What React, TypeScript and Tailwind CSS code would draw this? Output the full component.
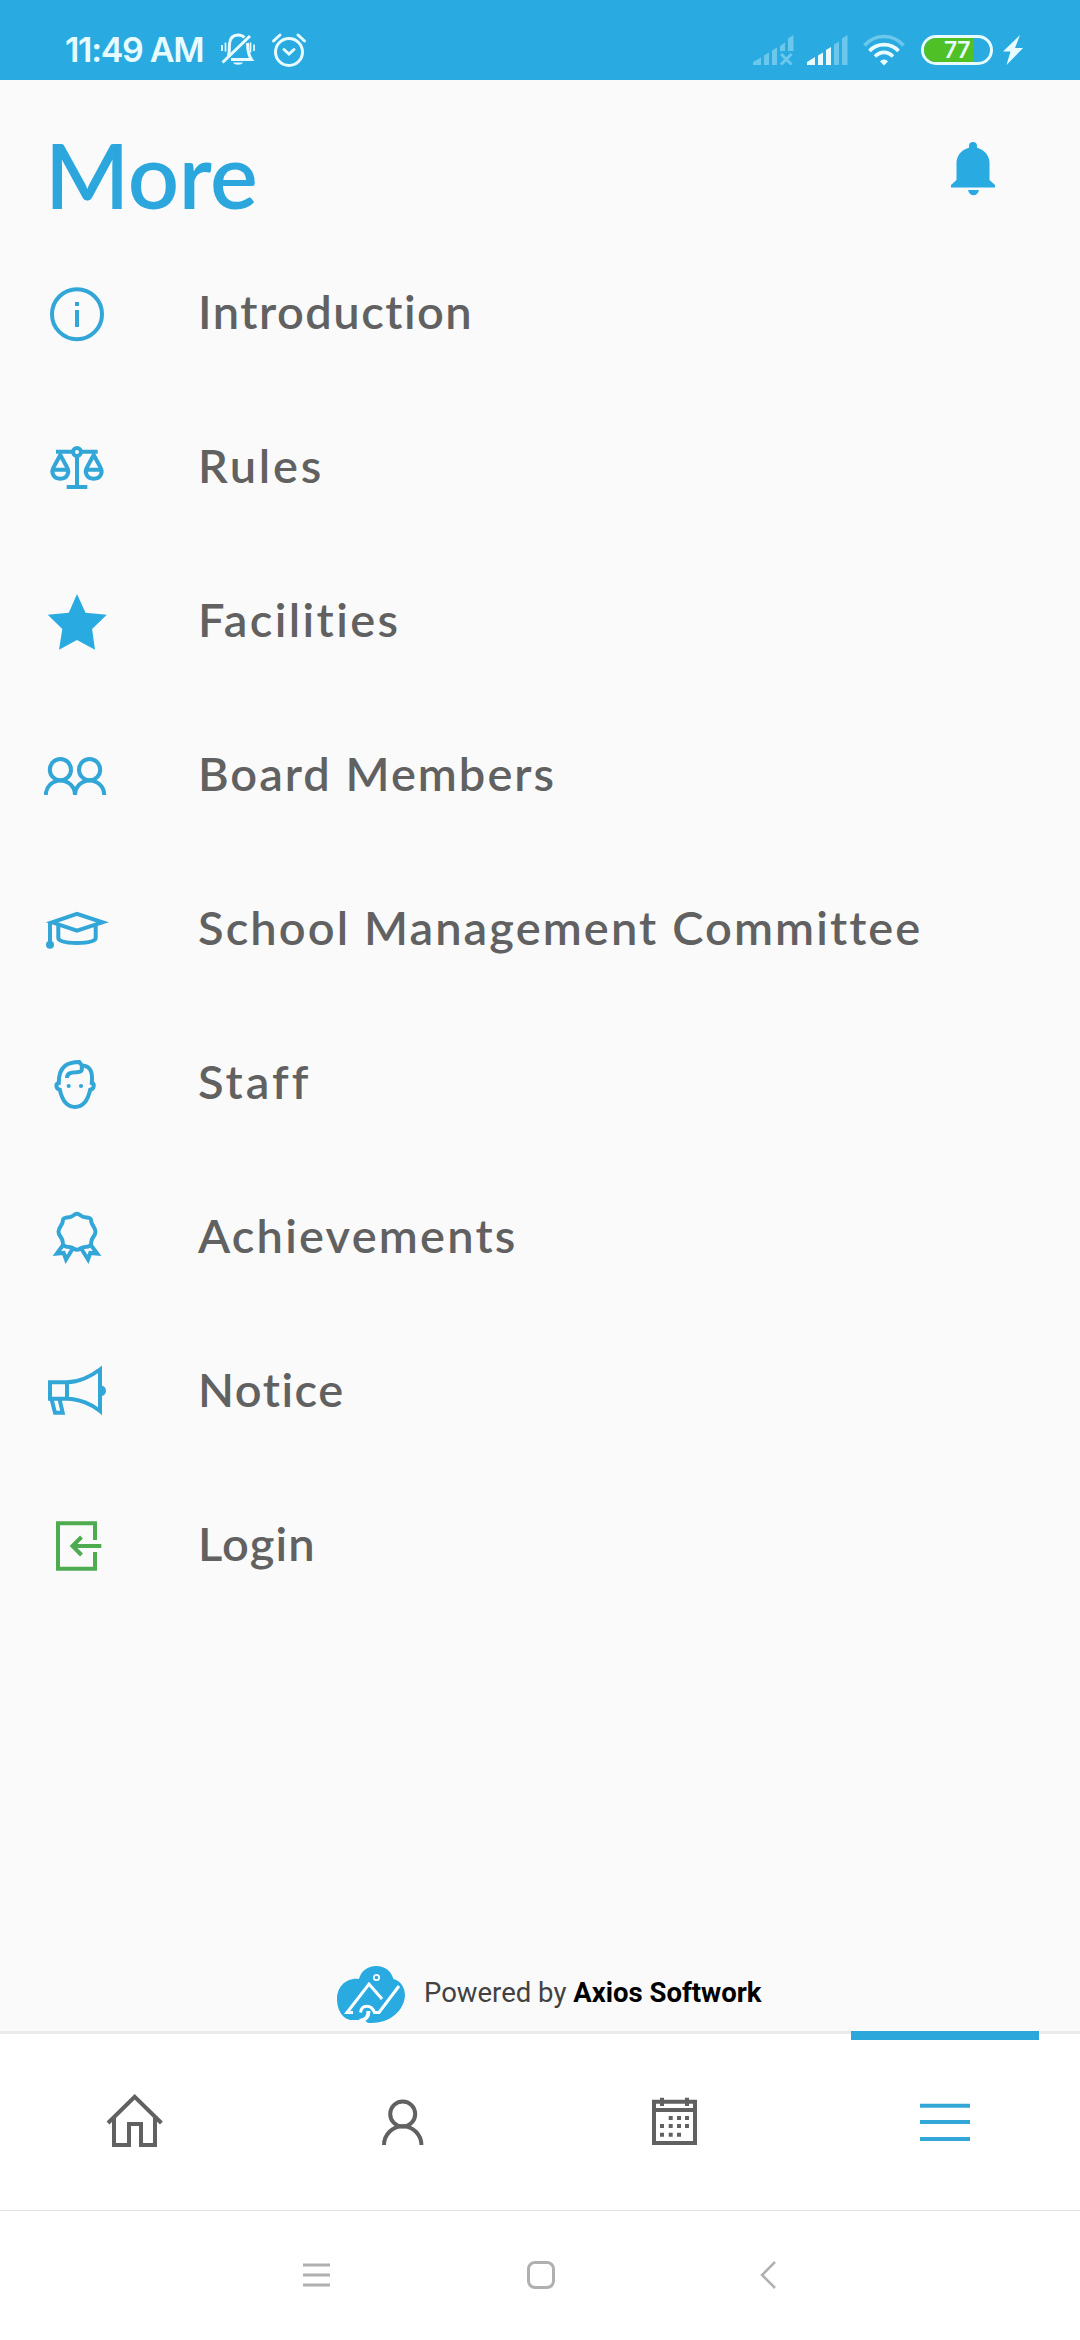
import type { ReactNode } from "react";

type MenuItem = {
  label: string;
  tracking: string;
  color: string;
  icon: ReactNode;
};

// Outline icon on a 66px grid
function LineIcon({ children }: { children: ReactNode }) {
  return (
    <svg
      viewBox="0 0 66 66"
      fill="none"
      stroke="currentColor"
      strokeWidth="4"
      className="size-[66px] shrink-0"
    >
      {children}
    </svg>
  );
}

const menuItems: MenuItem[] = [
  {
    label: "Introduction",
    tracking: "tracking-[1.5px]",
    color: "text-[#33a6d8]",
    icon: (
      <>
        <circle cx="33" cy="33.2" r="25" />
        <path d="M33 21v4M33 29v17" />
      </>
    ),
  },
  {
    label: "Rules",
    tracking: "tracking-[2.8px]",
    color: "text-[#33a6d8]",
    icon: (
      <>
        <circle cx="33" cy="17" r="4" />
        <path d="M12 16.7h17M37 16.7h16.7M33 21v31M22.7 52h20.6" />
        <path d="M16.3 20L10 31.5C6.5 37 9 43.7 16.3 43.7S26.1 37 22.6 31.5ZM8.5 34.8h15.6" />
        <path d="M49.7 20L43.4 31.5C39.9 37 42.4 43.7 49.7 43.7S59.5 37 56 31.5ZM41.9 34.8h15.6" />
      </>
    ),
  },
  {
    label: "Facilities",
    tracking: "tracking-[2.4px]",
    color: "text-[#29abe2]",
    icon: (
      <path
        fill="currentColor"
        stroke="none"
        d="M33 5l8.5 18.7 21.3 2L48.1 40 51 60.7 33 51 15 60.7 18.3 40 3.7 25.7l21.1-2z"
      />
    ),
  },
  {
    label: "Board Members",
    tracking: "tracking-[2px]",
    color: "text-[#33a6d8]",
    icon: (
      <>
        <circle cx="16.4" cy="26.7" r="10.6" />
        <circle cx="45.6" cy="26.7" r="10.6" />
        <path d="M1.8 52a14.6 14.6 0 0 1 29.2 0a14.6 14.6 0 0 1 29.2 0" />
      </>
    ),
  },
  {
    label: "School Management Committee",
    tracking: "tracking-[2.1px]",
    color: "text-[#33a6d8]",
    icon: (
      <>
        <path d="M8 25.3L33 16.8 58.5 25.3 33 33.7Z" />
        <path d="M14.3 28v13q0 4.7 18.7 4.9q18.7-.2 18.7-4.9V28M6 26v19" />
        <circle cx="6" cy="47.7" r="4" fill="currentColor" stroke="none" />
      </>
    ),
  },
  {
    label: "Staff",
    tracking: "tracking-[3px]",
    color: "text-[#33a6d8]",
    icon: (
      <>
        <path d="M23 27C23 22 27 21.5 32 21.3 36 21 38.5 21 37.8 16L38 14.5 35.3 11C24 11 14.5 15 14.8 32 11 33 12 38 15.8 38.7 18 49 22 56 31 56S44 49 46.2 38.7C50 38 51 33 47.8 32 49 20 46 15 38 14.5" />
        <circle cx="24.7" cy="35" r="2.1" fill="currentColor" stroke="none" />
        <circle cx="37" cy="35" r="2.1" fill="currentColor" stroke="none" />
      </>
    ),
  },
  {
    label: "Achievements",
    tracking: "tracking-[2.2px]",
    color: "text-[#33a6d8]",
    icon: (
      <>
        <path d="M33 8.7C36 8.7 37 12.3 41 12.3C45 12.3 47.3 12.8 47.3 16.5C47.3 20 51.5 22 51.5 26.7C51.5 31 47.3 32.5 47.3 37C47.3 41 45 42 41 42C37 42 36 44.8 33 44.8C30 44.8 29 42 25 42C21 42 18.7 41 18.7 37C18.7 32.5 14.5 31 14.5 26.7C14.5 22 18.7 20 18.7 16.5C18.7 12.8 21 12.3 25 12.3C29 12.3 30 8.7 33 8.7Z" />
        <path d="M19.5 39.5L12.8 48.6 19.7 48 22 54.5 28.5 44M46.5 39.5L53.2 48.6 46.3 48 44 54.5 37.5 44" />
      </>
    ),
  },
  {
    label: "Notice",
    tracking: "tracking-[1.5px]",
    color: "text-[#33a6d8]",
    icon: (
      <>
        <path d="M6 23.3h17v16.4H6zM23 23.3C35 23 48 16.5 56 10.5V52C48 45.5 35 39.9 23 39.7" />
        <path d="M7.5 40l3.5 13.7h7.7L15.5 40" />
        <path d="M57 26.5a5 5.2 0 0 1 0 10.4z" fill="currentColor" stroke="none" />
      </>
    ),
  },
  {
    label: "Login",
    tracking: "tracking-[1.1px]",
    color: "text-[#4fab50]",
    icon: (
      <>
        <path d="M51 27V10.3H14v45.4h37V39" />
        <path d="M57.3 33H28.5M37.5 24l-9 9 9 9" />
      </>
    ),
  },
];

const tabs = [
  {
    name: "home",
    icon: (
      <path d="M6 34L32.7 7.8 59.4 34M12 29v27h15V35h12v21h14V29" />
    ),
  },
  {
    name: "profile",
    icon: (
      <>
        <circle cx="30.7" cy="25" r="12.5" />
        <path d="M12 56a18.7 18.7 0 0 1 37.4 0" />
      </>
    ),
  },
  {
    name: "calendar",
    icon: (
      <>
        <path d="M12 12.7h41V54H12zM12 21h41M20 8.7V17M45 8.7V17" />
        <path d="M26.7 29h4M35 29h4M43 29h4M18 37h4M26.7 37h4M35 37h4M43 37h4M18 45.7h4M26.7 45.7h4M35 45.7h4" />
      </>
    ),
  },
  {
    name: "more",
    icon: <path d="M8 16.7h50M8 33h50M8 50h50" />,
  },
];

function StatusBar() {
  return (
    <header className="flex h-20 shrink-0 items-center bg-[#29abe2] pl-[65px] pr-[57px] pt-5 text-[#e8fbff]">
      <span className="w-[139px] whitespace-nowrap font-['Inter'] text-[34px] font-semibold leading-none tracking-[-1.3px]">
        11:49 AM
      </span>

      {/* Muted bell */}
      <svg viewBox="0 0 36 36" fill="none" stroke="currentColor" strokeWidth="3" className="ml-4 h-9 w-9">
        <path d="M8 24c2-3 1-8 1.5-12C10 6 13 3 18 3c3 0 5 1 6.5 2.5M27.5 11c.5 5-.5 10 4 16.5H11" />
        <path d="M2.5 30.5L30 4" />
        <path d="M13 30.5h10c-1.5 3-8.5 3-10 0z" fill="currentColor" stroke="none" />
        <path d="M2 13v6M5.5 10.5v9M30.5 10.5v10M34 12.5v6.5" strokeWidth="1.7" />
      </svg>

      {/* Alarm */}
      <svg viewBox="0 0 36 36" fill="none" stroke="currentColor" strokeWidth="3" strokeLinecap="round" className="ml-[15px] h-9 w-9">
        <circle cx="18" cy="20" r="13.5" />
        <path d="M2.5 9L9 3M27 3l6.5 6M13 17.5l5 4.500 5-4.500" />
      </svg>

      <div className="ml-auto flex items-center">
        <svg viewBox="0 0 41 30" fill="currentColor" className="h-[30px] w-[41px] opacity-35">
          <path d="M0 30v-3l8-4.5V30zM11 30V20.5l5-3V30zM19 30V15.5l5-3V30zM27 16v-5l5-3.5V16zM35 16V3.5L40.5 0v16z" />
          <path d="M28 19l10.5 10.5M38.5 19L28 29.5" stroke="currentColor" strokeWidth="3" />
        </svg>
        <svg viewBox="0 0 41 30" fill="currentColor" className="ml-[13px] h-[30px] w-[41px]">
          <path d="M0 30v-3l8-5v8zM11 30V20.5l5-3V30zM19 30V15l5-3V30z" />
          <path d="M27 30V9.5l5-3V30zM35 30V3.5L40.5 0v30z" opacity=".35" />
        </svg>
        <svg viewBox="0 0 42 32" fill="none" stroke="currentColor" strokeWidth="3.6" className="ml-[15px] h-8 w-[42px]">
          <path d="M1.5 11.5C12-.5 30-.5 40.5 11.5" opacity=".35" />
          <path d="M6.5 17C14 8.5 28 8.5 35.5 17M12 22.5c5-5.5 13-5.5 18 0" />
          <path d="M17 27.5c2-2.7 6-2.7 8 0l-4 4z" fill="currentColor" stroke="none" />
        </svg>
        <div className="ml-4 flex h-[30px] w-[72px] rounded-full border-3 border-current">
          <div className="flex h-6 w-[50px] items-center justify-end rounded-l-full bg-[#4fc126] pr-1 font-['Inter'] text-[23px] font-semibold leading-6 tracking-[-0.5px]">
            77
          </div>
        </div>
        <svg viewBox="0 0 20 30" fill="currentColor" className="ml-[10px] h-[30px] w-5">
          <path d="M17 0L0 16.5h7.5L3.5 30 20 13h-8z" />
        </svg>
      </div>
    </header>
  );
}

// Cloud mark of the vendor
function VendorLogo() {
  return (
    <svg viewBox="0 0 68 58" fill="none" className="h-[58px] w-[68px]">
      <path
        fill="#29abe2"
        d="M22 13C24 5 31 0 39 0c9 0 15 5 17.5 13C64 15 68 22 68 29.5 67 45 53 57 34 57c-3 0-5-.5-6-3H15C6 54 0 44 0 33 0 21 9 11.5 22 13z"
      />
      <circle cx="39.5" cy="11.5" r="2.7" stroke="#fff" strokeWidth="1.7" />
      <path d="M45 33L32 18 10 46.5h6M62 20L42 46.5h-4.5c-3-8.5-13-8.5-14 0" stroke="#fff" strokeWidth="3" />
      <path d="M31.5 45c0 6-2 9-9 10" stroke="#fafafa" strokeWidth="4" />
    </svg>
  );
}

export default function App() {
  return (
    <div className="flex h-[2340px] w-[1080px] flex-col overflow-hidden bg-[#fafafa]">
      <StatusBar />

      {/* Title */}
      <div className="flex h-[201px] shrink-0 items-start justify-between pl-[45px] pr-[85px]">
        <h1 className="mt-10 font-['Lato'] text-[90px] font-semibold leading-[108px] tracking-[-0.3px] text-[#2ba7de]">
          More
        </h1>
        <svg viewBox="0 0 44 54" fill="#29abe2" className="mt-[62px] h-[54px] w-11">
          <path d="M18 4a4 4 0 0 1 8 0v1.8C34 8 38.5 14 38.5 21v17l5.5 5v2.5H0V43l5.5-5V21C5.5 14 10 8 18 5.8zM17 48h11c-1.5 7-9.5 7-11 0z" />
        </svg>
      </div>

      <main className="flex flex-1 flex-col">
        {menuItems.map((item) => (
          <div key={item.label} className="flex h-[154px] shrink-0 items-start pl-11">
            <div className={item.color}>
              <LineIcon>{item.icon}</LineIcon>
            </div>
            <span
              className={`ml-[88px] whitespace-nowrap font-['Lato'] text-[47px] font-semibold leading-[60px] text-[#616161] ${item.tracking}`}
            >
              {item.label}
            </span>
          </div>
        ))}
      </main>

      {/* Vendor */}
      <div className="flex h-[65px] shrink-0 items-start pl-[337px]">
        <VendorLogo />
        <p className="ml-[19px] mt-[11px] whitespace-nowrap font-['Roboto'] text-[27.5px] leading-8 text-[#424242]">
          Powered by <span className="font-bold text-black">Axios Softwork</span>
        </p>
      </div>

      {/* Tabs */}
      <nav className="grid h-[180px] shrink-0 grid-cols-4 border-b border-t-3 border-b-[#e0e0e0] border-t-[#ebebeb] bg-white">
        {tabs.map((tab) => {
          const active = tab.name === "more";
          return (
            <button
              key={tab.name}
              className={`relative flex items-start justify-center pt-[55px] ${active ? "text-[#33a6d8]" : "text-[#616161]"}`}
            >
              {active && <span className="absolute left-[41px] -top-[3px] h-[9px] w-[188px] bg-[#2ba7dc]" />}
              <LineIcon>{tab.icon}</LineIcon>
            </button>
          );
        })}
      </nav>

      {/* System navigation */}
      <div className="flex h-[129px] shrink-0 items-center bg-white pb-0.5 pl-[303px] text-[#b0b0b0]">
        <svg viewBox="0 0 27 26" stroke="currentColor" strokeWidth="3" className="h-[26px] w-[27px]">
          <path d="M0 3h27M0 13h27M0 23h27" />
        </svg>
        <span className="ml-[197px] size-7 rounded-lg border-3 border-current" />
        <svg viewBox="0 0 16 28" fill="none" stroke="currentColor" strokeWidth="2.5" className="ml-[205px] h-7 w-4">
          <path d="M15 1L2 14l13 13" />
        </svg>
      </div>
    </div>
  );
}
